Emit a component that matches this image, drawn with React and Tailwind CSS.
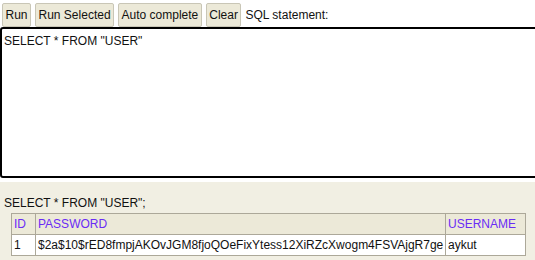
const buttons = ['Run', 'Run Selected', 'Auto complete', 'Clear'];

const rows = [
  { id: '1', password: '$2a$10$rED8fmpjAKOvJGM8fjoQOeFixYtess12XiRZcXwogm4FSVAjgR7ge', username: 'aykut' },
];

export default function App() {
  return (
    <div className="w-[535px] h-[260px] overflow-hidden bg-white text-[12px] leading-[14px] text-[#111] font-['Liberation_Sans',Arial,sans-serif]">
      {/* Toolbar */}
      <div className="flex items-center gap-[4px] pl-[2px] pt-[2px] h-[27px]">
        {buttons.map((b) => (
          <button
            key={b}
            className="h-[24px] px-[2.5px] bg-[#ece9d8] border border-[#c9c6b6] rounded-[2px] text-[12px] text-[#111]"
          >
            {b}
          </button>
        ))}
        <span>SQL statement:</span>
      </div>

      {/* SQL editor */}
      <div className="w-[560px] h-[151px] border-2 border-black rounded-[3px] px-[2px] pt-[5px]">
        SELECT * FROM "USER"
      </div>

      {/* Result */}
      <div className="mt-[4px] h-[80px] bg-[#f1efe3] pl-[4px] pt-[14px]">
        <div className="mb-[3px]">SELECT * FROM "USER";</div>
        <table className="ml-[7px] border-collapse border border-[#aca899] w-[515px] table-fixed">
          <colgroup>
            <col className="w-[24px]" />
            <col className="w-[410px]" />
            <col />
          </colgroup>
          <thead>
            <tr className="bg-[#ece9d8] h-[21px]">
              <th className="border border-[#aca899] px-[2px] text-left font-normal text-[#6a2cf5]">ID</th>
              <th className="border border-[#aca899] px-[2px] text-left font-normal text-[#6a2cf5]">PASSWORD</th>
              <th className="border border-[#aca899] px-[2px] text-left font-normal text-[#6a2cf5]">USERNAME</th>
            </tr>
          </thead>
          <tbody>
            {rows.map((r) => (
              <tr key={r.id} className="bg-white h-[21px]">
                <td className="border border-[#aca899] px-[2px]">{r.id}</td>
                <td className="border border-[#aca899] px-[2px] whitespace-nowrap">{r.password}</td>
                <td className="border border-[#aca899] px-[2px]">{r.username}</td>
              </tr>
            ))}
          </tbody>
        </table>
      </div>
    </div>
  );
}
